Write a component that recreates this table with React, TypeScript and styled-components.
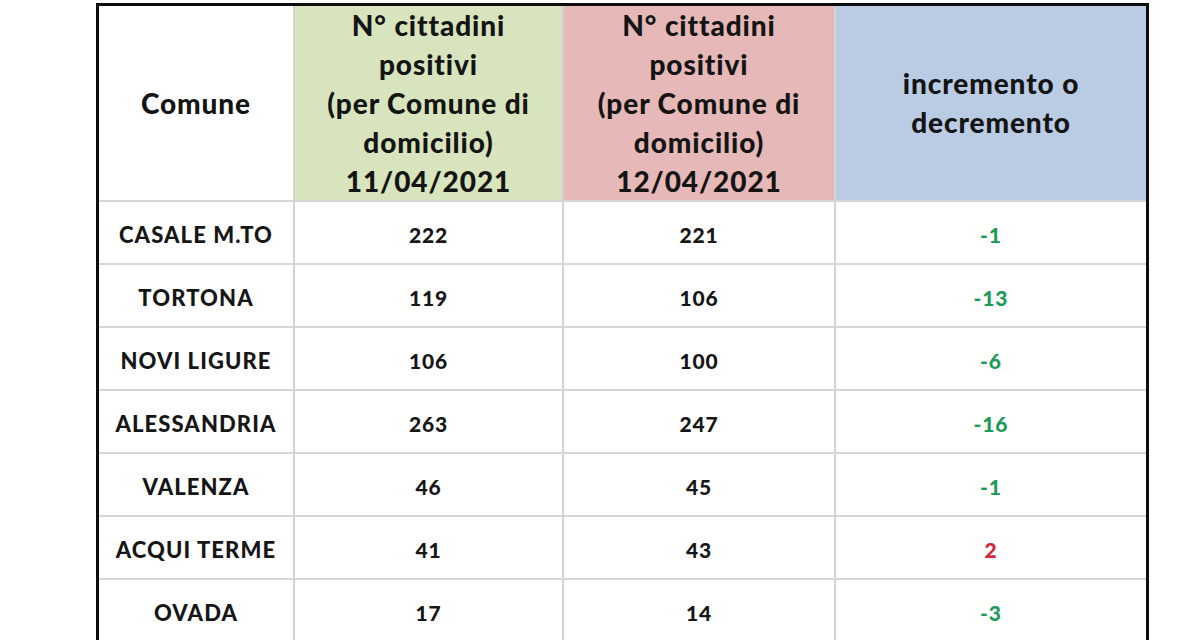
import React from "react";
import styled, { createGlobalStyle } from "styled-components";

const Global = createGlobalStyle`
  html, body {
    margin: 0;
    padding: 0;
    background: #ffffff;
    overflow: hidden;
    height: 640px;
  }
  body {
    font-family: Lato, "Open Sans", "Liberation Sans", sans-serif;
  }
`;

const Page = styled.div`
  width: 1200px;
  height: 640px;
  padding: 3px 0 0 96px;
  box-sizing: border-box;
  overflow: hidden;
`;

const Table = styled.div`
  width: 1053px;
  box-sizing: border-box;
  border: 3px solid #0d0d0d;
  display: grid;
  grid-template-columns: 196px 269px 272px 310px;
  grid-template-rows: 196px repeat(7, 63px);
  background: #ffffff;
`;

type Tone = "plain" | "green" | "red" | "blue";

const headBg: Record<Tone, string> = {
  plain: "#ffffff",
  green: "#d8e4bd",
  red: "#e6b9b8",
  blue: "#b9cce4",
};

const Cell = styled.div<{ $last?: boolean }>`
  display: flex;
  align-items: center;
  justify-content: center;
  text-align: center;
  box-sizing: border-box;
  border-bottom: 2px solid #d6d6d6;
  border-right: ${(p) => (p.$last ? "none" : "2px solid #d2d2d2")};
  font-weight: 900;
  letter-spacing: 0.9px;
`;

const HeadCell = styled(Cell)<{ $tone: Tone }>`
  background: ${(p) => headBg[p.$tone]};
  font-size: 28px;
  line-height: 39px;
  color: #141414;
`;

const NameCell = styled(Cell)`
  font-size: 22px;
  letter-spacing: 1.1px;
  color: #161616;
  padding-top: 4px;
`;

const NumCell = styled(Cell)`
  font-size: 21px;
  color: #161616;
  padding-top: 4px;
`;

const DiffCell = styled(Cell)<{ $up: boolean }>`
  font-size: 21px;
  color: ${(p) => (p.$up ? "#d4283a" : "#1c9a58")};
  padding-top: 4px;
`;

const rows: [string, number, number][] = [
  ["CASALE M.TO", 222, 221],
  ["TORTONA", 119, 106],
  ["NOVI LIGURE", 106, 100],
  ["ALESSANDRIA", 263, 247],
  ["VALENZA", 46, 45],
  ["ACQUI TERME", 41, 43],
  ["OVADA", 17, 14],
];

export default function App() {
  return (
    <>
      <Global />
      <Page>
        <Table>
          <HeadCell $tone="plain">Comune</HeadCell>
          <HeadCell $tone="green">
            N° cittadini
            <br />
            positivi
            <br />
            (per Comune di
            <br />
            domicilio)
            <br />
            11/04/2021
          </HeadCell>
          <HeadCell $tone="red">
            N° cittadini
            <br />
            positivi
            <br />
            (per Comune di
            <br />
            domicilio)
            <br />
            12/04/2021
          </HeadCell>
          <HeadCell $tone="blue" $last>
            incremento o
            <br />
            decremento
          </HeadCell>
          {rows.map(([name, a, b]) => {
            const d = b - a;
            return (
              <React.Fragment key={name}>
                <NameCell>{name}</NameCell>
                <NumCell>{a}</NumCell>
                <NumCell>{b}</NumCell>
                <DiffCell $up={d > 0} $last>
                  {d}
                </DiffCell>
              </React.Fragment>
            );
          })}
        </Table>
      </Page>
    </>
  );
}
